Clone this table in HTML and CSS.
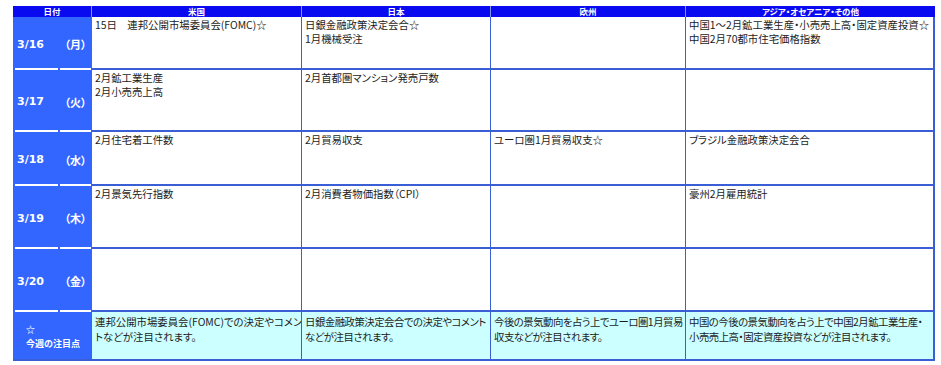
FILE: index.html
```html
<!DOCTYPE html>
<html lang="ja">
<head>
<meta charset="utf-8">
<title>今週の主な経済指標</title>
<link rel="stylesheet" href="styles.css">
</head>
<body>
<div class="sheet">
  <div class="hd hd-date">日付</div>
  <div class="hd">米国</div>
  <div class="hd">日本</div>
  <div class="hd">欧州</div>
  <div class="hd hd-last">アジア・オセアニア・その他</div>

  <div class="dt">3/16</div><div class="wd">（月）</div>
  <div class="c">15日　連邦公開市場委員会(FOMC)☆</div>
  <div class="c">日銀金融政策決定会合☆<br>1月機械受注</div>
  <div class="c"></div>
  <div class="c c-last">中国1～2月鉱工業生産・小売売上高・固定資産投資☆<br>中国2月70都市住宅価格指数</div>

  <div class="dt">3/17</div><div class="wd">（火）</div>
  <div class="c">2月鉱工業生産<br>2月小売売上高</div>
  <div class="c">2月首都圏マンション発売戸数</div>
  <div class="c"></div>
  <div class="c c-last"></div>

  <div class="dt">3/18</div><div class="wd">（水）</div>
  <div class="c">2月住宅着工件数</div>
  <div class="c">2月貿易収支</div>
  <div class="c">ユーロ圏1月貿易収支☆</div>
  <div class="c c-last">ブラジル金融政策決定会合</div>

  <div class="dt">3/19</div><div class="wd">（木）</div>
  <div class="c">2月景気先行指数</div>
  <div class="c">2月消費者物価指数（CPI）</div>
  <div class="c"></div>
  <div class="c c-last">豪州2月雇用統計</div>

  <div class="dt">3/20</div><div class="wd">（金）</div>
  <div class="c"></div>
  <div class="c"></div>
  <div class="c"></div>
  <div class="c c-last"></div>

  <div class="note-label">☆<br>今週の注目点</div>
  <div class="c note">連邦公開市場委員会(FOMC)での決定やコメン<br>トなどが注目されます。</div>
  <div class="c note tight">日銀金融政策決定会合での決定やコメント<br>などが注目されます。</div>
  <div class="c note tight">今後の景気動向を占う上でユーロ圏1月貿易<br>収支などが注目されます。</div>
  <div class="c note tight c-last">中国の今後の景気動向を占う上で中国2月鉱工業生産・<br>小売売上高・固定資産投資などが注目されます。</div>
</div>
</body>
</html>
```

FILE: styles.css
```css
html, body {
  margin: 0;
  padding: 0;
  background: #ffffff;
}

body {
  font-family: "Noto Sans CJK JP", "Noto Sans", sans-serif;
  color: #1c1c1c;
}

.sheet {
  display: grid;
  grid-template-columns: 46px 33px 210px 189px 195px 249px;
  grid-template-rows: 11px 53px 62px 54px 63px 63px 49px;
  margin: 6px 0 0 13px;
  width: 922px;
}

.hd {
  background: #0a0af0;
  color: #ffffff;
  font-weight: bold;
  font-size: 8.5px;
  line-height: 11px;
  text-align: center;
  white-space: nowrap;
  border-right: 1px solid #7d92f2;
  box-sizing: border-box;
  font-feature-settings: "palt";
}

.hd-date {
  grid-column: span 2;
}

.hd-last {
  border-right: none;
}

.dt, .wd {
  background-color: #3366ff;
  background-image: linear-gradient(#ffffff, #ffffff);
  background-repeat: no-repeat;
  background-size: 43px 2px;
  background-position: 2px 100%;
  color: #ffffff;
  font-weight: bold;
  display: flex;
  align-items: center;
  box-sizing: border-box;
}

.dt {
  font-family: "DejaVu Sans", "Noto Sans", sans-serif;
  font-size: 11px;
  padding-left: 4px;
  padding-top: 1px;
}

.wd {
  background-size: 31px 2px;
  background-position: 1px 100%;
  justify-content: center;
  font-size: 11px;
  font-feature-settings: "palt";
  padding-top: 1px;
}

.c {
  background: #ffffff;
  border-right: 1px solid #3a5ed6;
  border-bottom: 2px solid #3a5ed6;
  box-sizing: border-box;
  font-size: 10.4px;
  line-height: 14px;
  padding: 1px 0 0 3px;
  white-space: nowrap;
  overflow: hidden;
  font-feature-settings: "palt";
}

.c-last {
  border-right: 2px solid #3a5ed6;
}

.note {
  background: #ccffff;
  padding-top: 2px;
  line-height: 15px;
}

.tight {
  letter-spacing: -0.5px;
}

.note-label {
  grid-column: span 2;
  background: #3366ff;
  color: #ffffff;
  font-weight: bold;
  font-size: 9px;
  line-height: 14px;
  padding-left: 13px;
  display: flex;
  flex-direction: column;
  justify-content: center;
  box-sizing: border-box;
  border-bottom: 2px solid #3a5ed6;
  padding-top: 2px;
}
```
